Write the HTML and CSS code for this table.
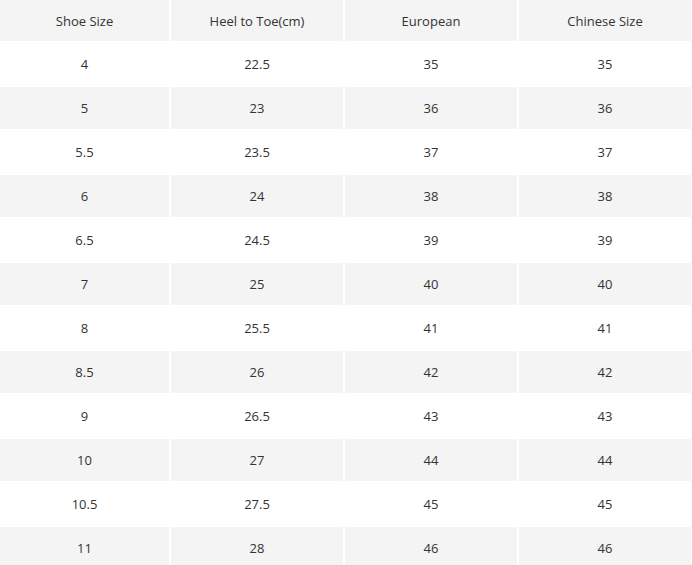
FILE: index.html
```html
<!DOCTYPE html>
<html>
<head>
<meta charset="utf-8">
<link rel="stylesheet" href="styles.css">
</head>
<body>
<div class="chart">
  <div class="row head"><div class="cell">Shoe Size</div><div class="cell">Heel to Toe(cm)</div><div class="cell">European</div><div class="cell">Chinese Size</div></div>
  <div class="row"><div class="cell">4</div><div class="cell">22.5</div><div class="cell">35</div><div class="cell">35</div></div>
  <div class="row alt"><div class="cell">5</div><div class="cell">23</div><div class="cell">36</div><div class="cell">36</div></div>
  <div class="row"><div class="cell">5.5</div><div class="cell">23.5</div><div class="cell">37</div><div class="cell">37</div></div>
  <div class="row alt"><div class="cell">6</div><div class="cell">24</div><div class="cell">38</div><div class="cell">38</div></div>
  <div class="row"><div class="cell">6.5</div><div class="cell">24.5</div><div class="cell">39</div><div class="cell">39</div></div>
  <div class="row alt"><div class="cell">7</div><div class="cell">25</div><div class="cell">40</div><div class="cell">40</div></div>
  <div class="row"><div class="cell">8</div><div class="cell">25.5</div><div class="cell">41</div><div class="cell">41</div></div>
  <div class="row alt"><div class="cell">8.5</div><div class="cell">26</div><div class="cell">42</div><div class="cell">42</div></div>
  <div class="row"><div class="cell">9</div><div class="cell">26.5</div><div class="cell">43</div><div class="cell">43</div></div>
  <div class="row alt"><div class="cell">10</div><div class="cell">27</div><div class="cell">44</div><div class="cell">44</div></div>
  <div class="row"><div class="cell">10.5</div><div class="cell">27.5</div><div class="cell">45</div><div class="cell">45</div></div>
  <div class="row alt"><div class="cell">11</div><div class="cell">28</div><div class="cell">46</div><div class="cell">46</div></div>
</div>
</body>
</html>
```
FILE: styles.css
```css
html, body {
  margin: 0;
  padding: 0;
  background: #ffffff;
}
body {
  font-family: "Open Sans", "Noto Sans", sans-serif;
  font-size: 13px;
  color: #333333;
  overflow: hidden;
}
.chart {
  display: flex;
  flex-direction: column;
  gap: 2px;
  width: 691px;
}
.row {
  display: grid;
  grid-template-columns: 169px 172px 172px 172px;
  column-gap: 2px;
  height: 42px;
}
.row.head {
  height: 41px;
}
.cell {
  display: flex;
  align-items: center;
  justify-content: center;
}
.head .cell,
.alt .cell {
  background: #f4f4f4;
}
```
